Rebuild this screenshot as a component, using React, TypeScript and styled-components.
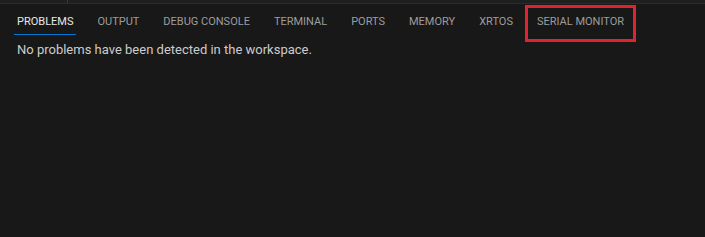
import styled, { createGlobalStyle } from 'styled-components'

const GlobalStyle = createGlobalStyle`
  html, body {
    margin: 0;
    padding: 0;
    background: #181818;
  }
  #root {
    height: 237px;
  }
`

const Panel = styled.div`
  height: 237px;
  display: flex;
  flex-direction: column;
  background: #181818;
  font-family: Roboto, 'Noto Sans', sans-serif;
`

const TopStrip = styled.div`
  height: 3px;
  display: flex;
  background: #1f1f1f;
  border-bottom: 1px solid #2b2b2b;
`

const Splitter = styled.div`
  width: 1px;
  margin-left: 67px;
  background: #3a3a3a;
`

const TabBar = styled.div`
  display: flex;
  align-items: stretch;
  height: 35px;
  padding-left: 6px;
`

const Tab = styled.div<{ $active?: boolean; $marked?: boolean }>`
  position: relative;
  display: flex;
  align-items: center;
  padding: 0 11px;
  margin-right: 2px;
  font-size: 11px;
  color: ${(p) => (p.$active ? '#e7e7e7' : '#9d9d9d')};
  white-space: nowrap;

  &::after {
    content: '';
    position: absolute;
    left: 8px;
    right: 8px;
    bottom: 4px;
    height: 1px;
    background: ${(p) => (p.$active ? '#0078d4' : 'transparent')};
  }

  ${(p) =>
    p.$marked &&
    `
    &::before {
      content: '';
      position: absolute;
      left: -1px;
      right: -1px;
      top: 1px;
      bottom: -3px;
      border: 3px solid #e0242f;
    }
  `}
`

const Message = styled.div`
  padding: 3px 17px;
  font-size: 13px;
  color: #cccccc;
`

const tabs = ['PROBLEMS', 'OUTPUT', 'DEBUG CONSOLE', 'TERMINAL', 'PORTS', 'MEMORY', 'XRTOS', 'SERIAL MONITOR']

export default function App() {
  return (
    <>
      <GlobalStyle />
      <Panel>
        <TopStrip>
          <Splitter />
        </TopStrip>
        <TabBar>
          {tabs.map((t, i) => (
            <Tab key={t} $active={i === 0} $marked={t === 'SERIAL MONITOR'}>
              {t}
            </Tab>
          ))}
        </TabBar>
        <Message>No problems have been detected in the workspace.</Message>
      </Panel>
    </>
  )
}
